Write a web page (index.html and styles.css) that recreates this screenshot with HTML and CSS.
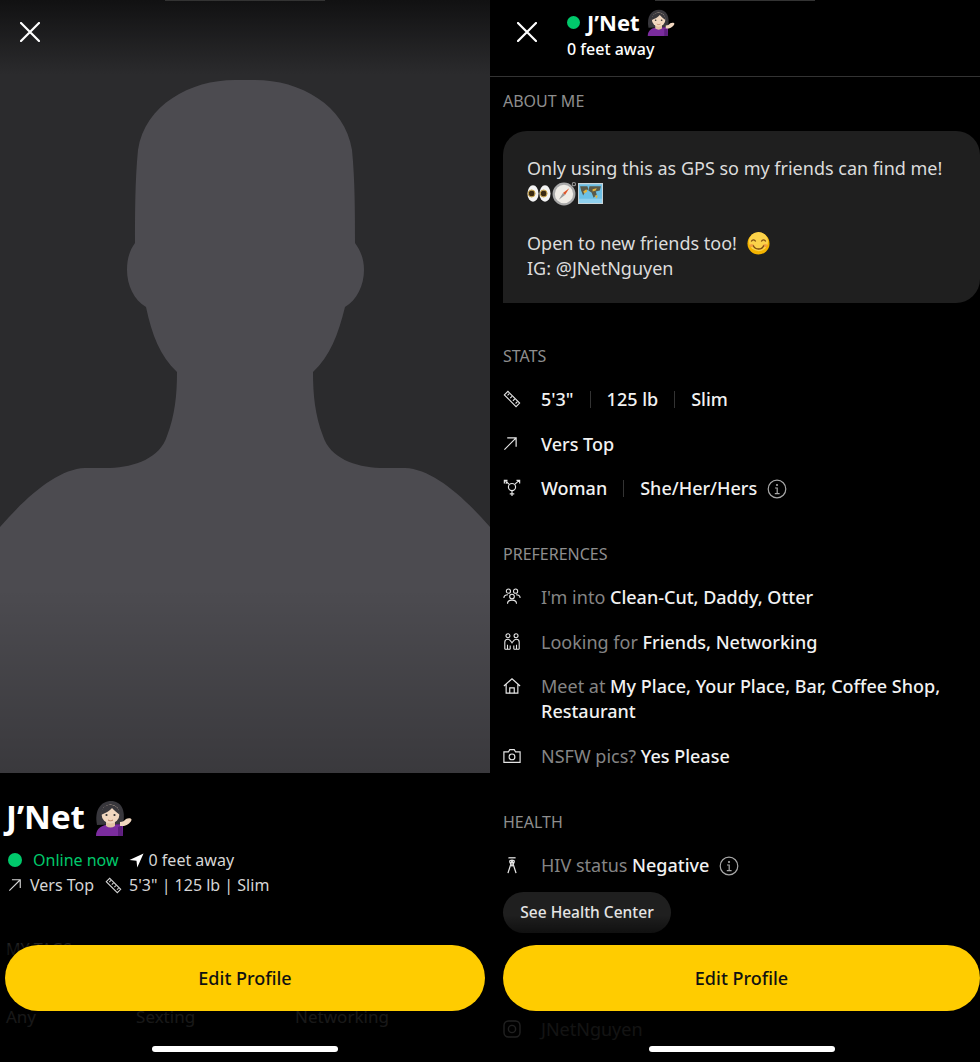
FILE: index.html
```html
<!DOCTYPE html>
<html lang="en">
<head>
  <meta charset="UTF-8">
  <meta name="viewport" content="width=device-width, initial-scale=1.0">
  <title>J'Net profile</title>
  <link rel="stylesheet" href="styles.css">
</head>
<body>

  <!-- shared icons -->
  <svg class="defs" width="0" height="0">
    <symbol id="i-close" viewBox="0 0 20 20"><path d="M1 1 19 19M19 1 1 19" fill="none" stroke="#fff" stroke-width="2.2" stroke-linecap="round"/></symbol>
    <symbol id="i-ruler" viewBox="0 0 20 20"><g fill="none" stroke="currentColor" stroke-width="1.2"><path d="M1.5 5.5 5.5 1.5 18.5 14.5 14.5 18.5Z"/><path d="M5 6 7 4M8 9 10 7M11 12 13 10M14 15 16 13"/></g></symbol>
    <symbol id="i-arrow" viewBox="0 0 16 16"><path d="M1.5 14.5 14 2M4.5 2H14V11.5" fill="none" stroke="currentColor" stroke-width="1.3"/></symbol>
    <symbol id="i-gender" viewBox="0 0 20 20"><g fill="none" stroke="currentColor" stroke-width="1.3"><circle cx="10" cy="9" r="4"/><path d="M10 13V19M7.5 16.5H12.5M7 6 2 1.5M1.5 5V1.5H5M13 6 18 1.5M15 1.5H18.5V5M3 5 5 3"/></g></symbol>
    <symbol id="i-info" viewBox="0 0 20 20"><g fill="none" stroke="currentColor" stroke-width="1.2"><circle cx="10" cy="10" r="8.8"/><path d="M8 9H10.2V14.5M7.8 14.7H12.6"/></g><circle cx="10" cy="6" r="1.1" fill="currentColor"/></symbol>
    <symbol id="i-group" viewBox="0 0 20 20"><g fill="none" stroke="currentColor" stroke-width="1.2"><circle cx="6" cy="3.5" r="2.3"/><circle cx="14" cy="3.5" r="2.3"/><circle cx="10" cy="9.5" r="2.6"/><path d="M1 11C1 8 3 7.5 5.5 7.5M19 11C19 8 17 7.5 14.5 7.5M5 17.5C5 14.5 7 13.5 10 13.5S15 14.5 15 17.5"/></g></symbol>
    <symbol id="i-pair" viewBox="0 0 20 20"><g fill="none" stroke="currentColor" stroke-width="1.2"><circle cx="5.5" cy="3" r="2.2"/><circle cx="14.5" cy="3" r="2.2"/><path d="M2 18V10C2 8 3.5 7 5.5 7S8 8 10 11C12 8 12.500 7 14.500 7S18 8 18 10V18M5 18V13M15 18V13M8 18V14M12 18V14M2 18H8M12 18H18"/></g></symbol>
    <symbol id="i-home" viewBox="0 0 20 20"><g fill="none" stroke="currentColor" stroke-width="1.3"><path d="M1 10 10 2 19 10M3.500 8V18H16.500V8"/><path d="M7.500 18V12H12.500V18"/></g></symbol>
    <symbol id="i-camera" viewBox="0 0 20 16"><g fill="none" stroke="currentColor" stroke-width="1.3"><path d="M1 3.500H6L7.500 1H12.500L14 3.500H19V15H1Z"/><circle cx="10" cy="9" r="3.200"/></g></symbol>
    <symbol id="i-ribbon" viewBox="0 0 14 20"><g fill="none" stroke="currentColor" stroke-width="1.400"><path d="M3 2H11"/><path d="M7 5 11.500 19M7 5 2.500 19M4.500 6C4.500 4 9.500 4 9.500 6C9.500 8 8 9 7 11C6 9 4.500 8 4.500 6Z"/></g></symbol>
    <symbol id="i-nav" viewBox="0 0 16 16"><path d="M15.500 .5 .5 7.500 8 8.200 8.800 15.500Z" fill="currentColor"/></symbol>
    <symbol id="i-insta" viewBox="0 0 18 18"><g fill="none" stroke="currentColor" stroke-width="1.400"><rect x="1" y="1" width="16" height="16" rx="4.500"/><circle cx="9" cy="9" r="3.600"/></g></symbol>

    <symbol id="e-woman" viewBox="0 0 38 36">
      <path d="M3 25C0 10 7 1 17 1C27 1 32 10 29 24Z" fill="#38373c"/>
      <path d="M2 36C2 28 8 25 16 24C20 25 25 24 29 24L29 36Z" fill="#7b2c9e"/>
      <path d="M24 36V27L28 25L29 36Z" fill="#5e1f7e"/>
      <path d="M12 18H21V26C18 28 15 28 12 26Z" fill="#e2c2a4"/>
      <ellipse cx="16.500" cy="14" rx="9" ry="9.500" fill="#f1d7bf"/>
      <path d="M7 15C7 8 12 4 18 5C23 6 26 10 26 15C23 13 20 10 18 8C16 11 11 13 7 15Z" fill="#38373c"/>
      <circle cx="12.500" cy="15" r="1.100" fill="#333"/><circle cx="20.500" cy="15" r="1.100" fill="#333"/>
      <path d="M14 20C15.500 21 17.500 21 19 20" fill="none" stroke="#b9805f" stroke-width="1"/>
      <path d="M26 22C29 22 30 21 32 19C34 18 38 18 37.500 20C37 22 34 25 30 26L26 26Z" fill="#f1d7bf"/>
    </symbol>
    <symbol id="e-eyes" viewBox="0 0 26 20">
      <ellipse cx="6.500" cy="10" rx="6" ry="9" fill="#f4f4f4"/><ellipse cx="19.500" cy="10" rx="6" ry="9" fill="#f4f4f4"/>
      <circle cx="5" cy="10" r="3.200" fill="#3a2a12"/><circle cx="18" cy="10" r="3.200" fill="#3a2a12"/>
      <circle cx="5" cy="10" r="3.800" fill="none" stroke="#b8860b" stroke-width=".8"/><circle cx="18" cy="10" r="3.800" fill="none" stroke="#b8860b" stroke-width=".8"/>
    </symbol>
    <symbol id="e-compass" viewBox="0 0 24 24">
      <circle cx="11.500" cy="12.500" r="11" fill="#a9a9a9"/><circle cx="11.500" cy="12.500" r="8.800" fill="#efece6"/>
      <circle cx="21" cy="3" r="1.600" fill="none" stroke="#999" stroke-width="1"/>
      <path d="M16.500 7 12.500 13.500 10.500 11.500Z" fill="#e0562a"/><path d="M6.500 18 10.500 11.500 12.500 13.500Z" fill="#9a9a9a"/>
    </symbol>
    <symbol id="e-map" viewBox="0 0 24 20">
      <rect x=".5" y=".5" width="23" height="19" fill="#6cc0e6"/>
      <path d="M2 3H9L10 6 7 8 5 12 3 7ZM11 3H22L21 7 17 8 18 11 15 14 13 9 10 7Z" fill="#5a5a4a"/>
      <path d="M5 8 8 6 9 8 6 10ZM14 6 18 5 17 7 14 8ZM16 12 19 12 18 15Z" fill="#e2b33c"/>
      <path d="M.5 15H23.500V19.500H.5Z" fill="#8fd0ee"/>
      <path d="M.5 .5H23.500V19.500H.5Z" fill="none" stroke="#c9d4d8"/>
    </symbol>
    <symbol id="e-smile" viewBox="0 0 24 24">
      <circle cx="12" cy="12" r="11.500" fill="#f4b400"/><circle cx="12" cy="10" r="10" fill="#fbd24a"/>
      <ellipse cx="5" cy="14" rx="2.500" ry="1.600" fill="#f08a3c" opacity=".7"/><ellipse cx="19" cy="14" rx="2.500" ry="1.600" fill="#f08a3c" opacity=".7"/>
      <path d="M4.500 10C5.500 7.500 8 7.500 9 10M15 10C16 7.500 18.500 7.500 19.500 10" fill="none" stroke="#7a4a10" stroke-width="1.300"/>
      <path d="M6.500 14C8 19 16 19 17.500 14" fill="none" stroke="#7a4a10" stroke-width="1.400"/>
    </symbol>
  </svg>

  <div class="screen">

    <!-- photo panel -->
    <section class="panel">
      <div class="photo">
        <svg class="silhouette" viewBox="0 0 490 773" preserveAspectRatio="none">
          <path d="M0 527C28 495 58 469 85 468L110 468C135 467 160 458 167 436C175 415 177 395 177 372C160 356 152 335 146 307C134 300 127 285 127 270C127 258 130 250 135 243C135 215 135 180 138 150C145 105 190 80 235 80L255 80C300 80 345 105 352 150C355 180 355 215 355 243C360 250 364 258 364 270C364 285 357 300 345 307C338 335 330 356 313 372C313 395 315 415 323 436C330 458 355 467 380 468L405 468C432 469 462 495 490 527V773H0Z" fill="#4c4b50"/>
        </svg>
        <div class="photo-top"></div>
        <div class="photo-bottom"></div>
        <div class="notch"></div>
        <svg class="close close-photo"><use href="#i-close"/></svg>
      </div>

      <div class="info">
        <h1 class="name">J’Net <svg class="emoji-lg"><use href="#e-woman"/></svg></h1>
        <div class="meta meta-first">
          <span class="dot"></span>
          <span class="online">Online now</span>
          <svg class="nav-icon"><use href="#i-nav"/></svg>
          <span>0 feet away</span>
        </div>
        <div class="meta">
          <svg class="meta-arrow"><use href="#i-arrow"/></svg>
          <span class="meta-role">Vers Top</span>
          <svg class="meta-ruler"><use href="#i-ruler"/></svg>
          <span>5'3" | 125 lb | Slim</span>
        </div>
        <div class="label ghost-label">MY TAGS</div>
        <div class="ghost-line">
          <span>Any</span><span>Sexting</span><span>Networking</span>
        </div>
      </div>

      <div class="fade"></div>
      <button class="edit-btn edit-left">Edit Profile</button>
      <div class="home-bar"></div>
    </section>

    <!-- details panel -->
    <section class="panel">
      <div class="notch"></div>
      <header class="top">
        <svg class="close"><use href="#i-close"/></svg>
        <div class="top-text">
          <div class="top-name"><span class="top-dot"></span>J’Net <svg class="emoji-md"><use href="#e-woman"/></svg></div>
          <div class="top-dist">0 feet away</div>
        </div>
      </header>

      <div class="details">
        <div class="label label-first">ABOUT ME</div>
        <div class="bubble">
          <p>Only using this as GPS so my friends can find me!</p>
          <p class="emoji-line"><svg class="e-eyes"><use href="#e-eyes"/></svg><svg class="e-compass"><use href="#e-compass"/></svg><svg class="e-map"><use href="#e-map"/></svg></p>
          <p>&nbsp;</p>
          <p>Open to new friends too! <svg class="e-smile"><use href="#e-smile"/></svg></p>
          <p>IG: @JNetNguyen</p>
        </div>

        <div class="label">STATS</div>
        <ul class="rows">
          <li class="row"><svg class="ic"><use href="#i-ruler"/></svg><span class="val">5'3"</span><span class="sep"></span><span class="val">125 lb</span><span class="sep"></span><span class="val">Slim</span></li>
          <li class="row"><svg class="ic ic-sm"><use href="#i-arrow"/></svg><span class="val">Vers Top</span></li>
          <li class="row"><svg class="ic"><use href="#i-gender"/></svg><span class="val">Woman</span><span class="sep"></span><span class="val">She/Her/Hers</span><svg class="info-ic"><use href="#i-info"/></svg></li>
        </ul>

        <div class="label">PREFERENCES</div>
        <ul class="rows">
          <li class="row"><svg class="ic"><use href="#i-group"/></svg><span class="txt">I'm into <b>Clean-Cut, Daddy, Otter</b></span></li>
          <li class="row"><svg class="ic"><use href="#i-pair"/></svg><span class="txt">Looking for <b>Friends, Networking</b></span></li>
          <li class="row"><svg class="ic"><use href="#i-home"/></svg><span class="txt">Meet at <b>My Place, Your Place, Bar, Coffee Shop, Restaurant</b></span></li>
          <li class="row"><svg class="ic"><use href="#i-camera"/></svg><span class="txt">NSFW pics? <b>Yes Please</b></span></li>
        </ul>

        <div class="label">HEALTH</div>
        <ul class="rows">
          <li class="row"><svg class="ic"><use href="#i-ribbon"/></svg><span class="txt">HIV status <b>Negative</b></span><svg class="info-ic"><use href="#i-info"/></svg></li>
        </ul>
        <button class="health-btn">See Health Center</button>
        <div class="row insta"><svg class="ic"><use href="#i-insta"/></svg><span class="txt">JNetNguyen</span></div>
      </div>

      <div class="fade"></div>
      <button class="edit-btn edit-right">Edit Profile</button>
      <div class="home-bar"></div>
    </section>

  </div>

</body>
</html>
```

FILE: styles.css
```css
* { box-sizing: border-box; }
html, body { margin: 0; padding: 0; background: #000; }
body { font-family: "Noto Sans", "Open Sans", sans-serif; color: #fff; overflow: hidden; }
.defs { position: absolute; }
svg { display: block; }

.screen { display: flex; width: 980px; height: 1062px; }
.panel { position: relative; width: 490px; height: 1062px; overflow: hidden; background: #000; }

/* photo */
.photo { position: relative; height: 773px; background: #2b2b2d; overflow: hidden; }
.silhouette { width: 490px; height: 773px; }
.photo-top { position: absolute; left: 0; right: 0; top: 0; height: 75px; background: linear-gradient(#111112, rgba(17, 17, 18, 0)); }
.photo-bottom { position: absolute; left: 0; right: 0; bottom: 0; height: 185px; background: linear-gradient(rgba(0, 0, 0, 0), rgba(0, 0, 0, .24)); }
.notch { position: absolute; left: 165px; top: 0; width: 160px; height: 1px; background: #333; }
.close { width: 20px; height: 20px; flex: none; }
.close-photo { position: absolute; left: 20px; top: 22px; }

/* under the photo */
.info { padding: 24px 6px 0; }
.name { display: flex; align-items: center; gap: 9px; margin: 0; font-size: 33px; line-height: 40px; font-weight: 700; }
.emoji-lg { width: 38px; height: 36px; margin-top: 2px; }
.meta { display: flex; align-items: center; height: 22px; margin-top: 3px; font-size: 16px; color: #d6d6d6; }
.meta-first { margin-top: 12px; }
.dot { width: 14px; height: 14px; margin: 0 11px 0 2px; border-radius: 50%; background: #00c96b; }
.online { color: #00c96b; margin-right: 10px; }
.nav-icon { width: 15px; height: 15px; margin-right: 5px; color: #fff; }
.meta-arrow { width: 14px; height: 14px; margin: 0 8px 0 2px; }
.meta-role { margin-right: 11px; }
.meta-ruler { width: 17px; height: 17px; margin-right: 7px; }
.ghost-label { margin-top: 42px; }
.ghost-line { display: flex; gap: 100px; margin-top: 46px; font-size: 17px; color: #aaa; }

/* details */
.top { display: flex; height: 77px; padding: 22px 0 0 27px; border-bottom: 1px solid #333; }
.top-text { margin: -14px 0 0 30px; }
.top-name { display: flex; align-items: center; height: 28px; font-size: 22px; font-weight: 700; }
.top-dot { width: 13px; height: 13px; margin-right: 7px; border-radius: 50%; background: #00c96b; }
.emoji-md { width: 29px; height: 27px; margin-left: 6px; }
.top-dist { margin-top: 2px; font-size: 16px; line-height: 22px; font-weight: 500; }

.details { padding-left: 13px; }
.label { height: 20px; margin-top: 43px; font-size: 16px; line-height: 20px; color: #8e8e8e; }
.label-first { margin-top: 14px; }

.bubble { height: 172px; margin-top: 20px; padding: 25px 0 0 24px; border-radius: 24px 24px 24px 0; background: #1f1f1f; font-size: 18px; line-height: 25px; color: #dcdcdc; }
.bubble p { display: flex; align-items: center; height: 25px; margin: 0; white-space: pre-wrap; }
.emoji-line { gap: 1px; }
.e-eyes { width: 24px; height: 19px; }
.e-compass { width: 25px; height: 25px; }
.e-map { width: 25px; height: 21px; }
.e-smile { width: 23px; height: 23px; margin-left: 5px; }

.rows { display: flex; flex-direction: column; gap: 19.5px; margin: 21px 0 0; padding: 0; list-style: none; }
.row { display: flex; align-items: flex-start; font-size: 18px; line-height: 25px; }
.ic { flex: none; width: 18px; height: 18px; margin: 3px 20px 0 0; color: #e6e6e6; }
.ic-sm { width: 15px; height: 15px; margin: 4px 23px 0 0; }
.val { font-weight: 500; color: #f2f2f2; }
.sep { width: 1px; height: 17px; margin: 4px 16px 0; background: #333; }
.txt { color: #858585; max-width: 400px; }
.txt b { font-weight: 500; color: #f2f2f2; }
.info-ic { width: 20px; height: 20px; margin: 3px 0 0 10px; color: #a8a8a8; }

.health-btn { display: block; width: 168px; height: 41px; margin-top: 14px; padding: 0; border: none; border-radius: 21px; background: #1f1f1f; color: #e6e6e6; font: 500 15.500px "Noto Sans", sans-serif; }
.insta { margin-top: 84px; }

/* overlays */
.fade { position: absolute; left: 0; right: 0; top: 915px; bottom: 0; background: linear-gradient(rgba(0, 0, 0, 0), rgba(0, 0, 0, .86) 22%); }
.edit-btn { position: absolute; top: 945px; height: 66px; padding: 0; border: none; border-radius: 33px; background: #ffcc00; color: #111; font: 500 18px "Noto Sans", sans-serif; }
.edit-left { left: 5px; width: 480px; }
.edit-right { left: 13px; width: 477px; }
.home-bar { position: absolute; left: 152px; top: 1046px; width: 186px; height: 6px; border-radius: 3px; background: #fff; }
.panel:last-child .home-bar { left: 159px; }
```
